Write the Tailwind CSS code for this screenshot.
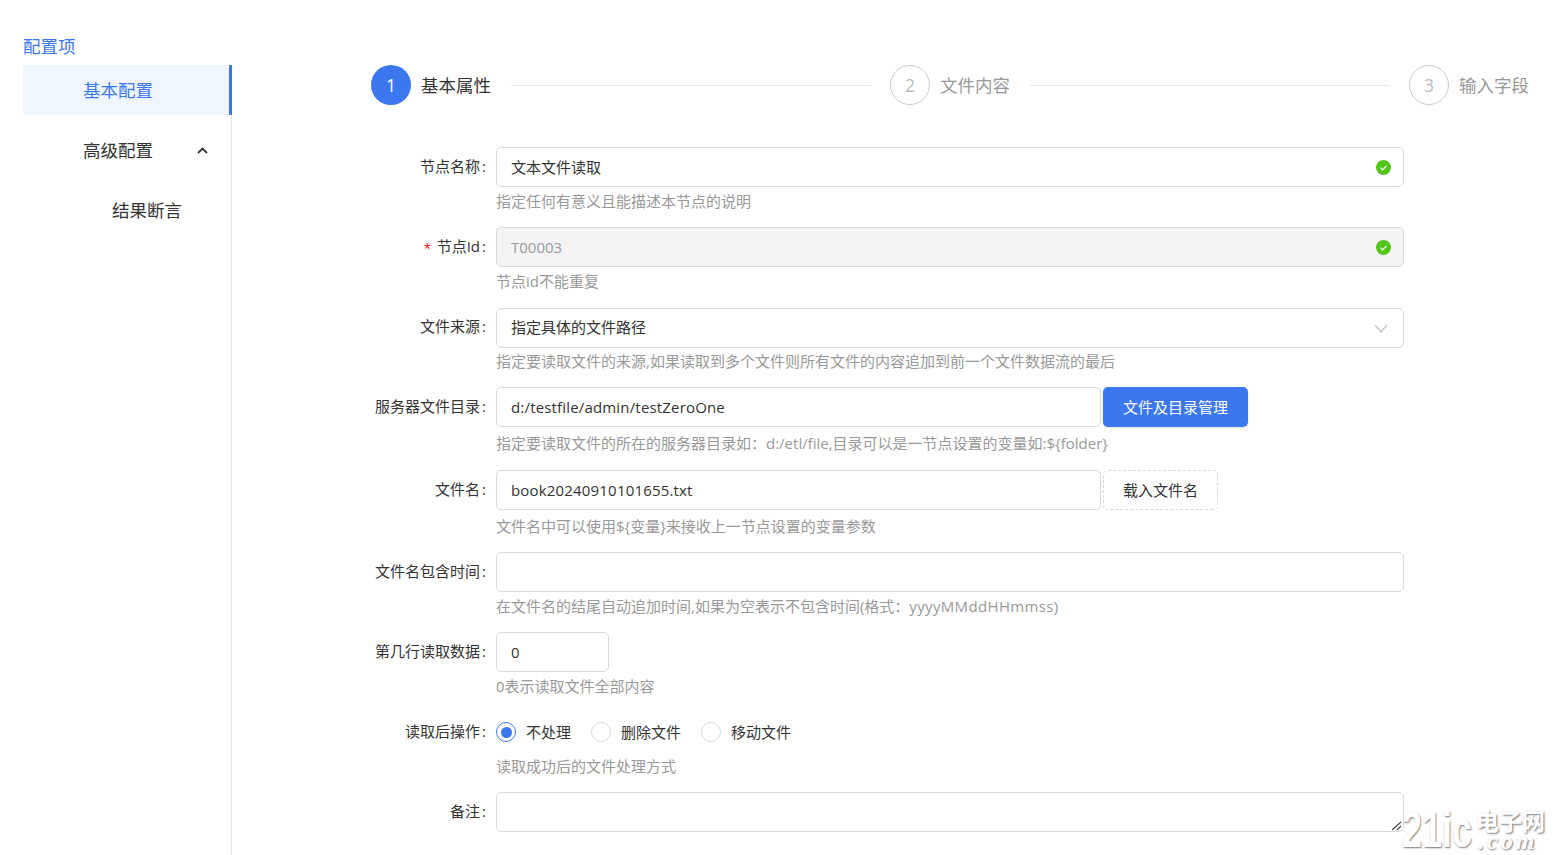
<!DOCTYPE html>
<html lang="zh-CN">
<head>
    <meta charset="UTF-8">
    <title>文本文件读取</title>
    <script src="https://cdn.jsdelivr.net/npm/@tailwindcss/browser@4"></script>
</head>
<body class="bg-white text-[#333] h-[855px] overflow-hidden relative font-['Open_Sans','Noto_Sans_CJK_SC',sans-serif] text-[15px]">

<div class="flex h-[855px]">
    <!-- Sidebar -->
    <aside class="w-[232px] pl-[23px] shrink-0">
        <div class="h-[65px] pt-[33px] text-[17.5px] leading-[26px] text-[#3b78f0]">配置项</div>
        <div class="border-r border-[#e8e8e8] h-[790px] w-full">
            <div class="h-[50px] bg-[#f0f6ff] border-r-[3px] border-[#3b78f0] mr-[-1px] pl-[60px] flex items-center text-[17.5px] text-[#3b78f0]">基本配置</div>
            <div class="h-[50px] mt-[10px] pl-[60px] pr-[23px] flex items-center justify-between text-[17.5px]">
                <span>高级配置</span>
                <svg class="w-[11px] h-[7px]" viewBox="0 0 11 7" fill="none" stroke="#333" stroke-width="1.8"><path d="M1 6l4.5-4.5L10 6"/></svg>
            </div>
            <div class="h-[50px] mt-[10px] pl-[89px] flex items-center text-[17.5px]">结果断言</div>
        </div>
    </aside>

    <!-- Main -->
    <main class="flex-1 pl-[139px] pr-[26px]">
        <!-- Steps -->
        <div class="flex items-center mt-[65px] h-[40px] text-[17.5px]">
            <div class="w-[40px] h-[40px] rounded-full bg-[#3b78f0] text-white flex items-center justify-center shrink-0">1</div>
            <span class="ml-[10px] w-[71px] shrink-0">基本属性</span>
            <div class="flex-1 h-px bg-[#e8e8e8] mx-[19px]"></div>
            <div class="w-[40px] h-[40px] rounded-full border border-[#ccc] text-[#bbb] flex items-center justify-center shrink-0">2</div>
            <span class="ml-[10px] w-[71px] text-[#999] shrink-0">文件内容</span>
            <div class="flex-1 h-px bg-[#e8e8e8] mx-[19px]"></div>
            <div class="w-[40px] h-[40px] rounded-full border border-[#ccc] text-[#bbb] flex items-center justify-center shrink-0">3</div>
            <span class="ml-[10px] w-[71px] text-[#999] shrink-0">输入字段</span>
        </div>

        <!-- Form -->
        <form class="mt-[42px] w-[1033px]">
            <div class="flex h-[80px]">
                <label class="w-[125px] pr-[10px] h-[38px] flex items-center justify-end shrink-0">节点名称<span class="ml-[2px]">:</span></label>
                <div class="flex-1">
                    <div class="h-[40px] border border-[#d9d9d9] rounded-[5px] flex items-center justify-between pl-[14px] pr-[12px]">
                        <span>文本文件读取</span>
                        <svg class="w-[15px] h-[15px]" viewBox="0 0 15 15"><circle cx="7.5" cy="7.5" r="7.5" fill="#52c41a"/><path d="M4.5 7.7l2.1 2.1 3.9-4" fill="none" stroke="#fff" stroke-width="1.2"/></svg>
                    </div>
                    <p class="leading-[28px] text-[#999]">指定任何有意义且能描述本节点的说明</p>
                </div>
            </div>

            <div class="flex h-[81px]">
                <label class="w-[125px] pr-[10px] h-[38px] flex items-center justify-end shrink-0"><span class="font-['Liberation_Sans'] text-[#f5222d] text-[17px] leading-none mr-[6px] translate-y-[3px]">*</span>节点Id<span class="ml-[2px]">:</span></label>
                <div class="flex-1">
                    <div class="h-[40px] border border-[#d9d9d9] rounded-[5px] bg-[#f4f4f4] flex items-center justify-between pl-[14px] pr-[12px] text-[#999]">
                        <span>T00003</span>
                        <svg class="w-[15px] h-[15px]" viewBox="0 0 15 15"><circle cx="7.5" cy="7.5" r="7.5" fill="#52c41a"/><path d="M4.5 7.7l2.1 2.1 3.9-4" fill="none" stroke="#fff" stroke-width="1.2"/></svg>
                    </div>
                    <p class="leading-[28px] text-[#999]">节点id不能重复</p>
                </div>
            </div>

            <div class="flex h-[79px]">
                <label class="w-[125px] pr-[10px] h-[36px] flex items-center justify-end shrink-0">文件来源<span class="ml-[2px]">:</span></label>
                <div class="flex-1">
                    <div class="h-[40px] border border-[#d9d9d9] rounded-[5px] flex items-center justify-between pl-[14px] pr-[15px]">
                        <span class="-translate-y-px">指定具体的文件路径</span>
                        <svg class="w-[14px] h-[9px]" viewBox="0 0 14 9" fill="none" stroke="#c4c4c4" stroke-width="1.2"><path d="M1 1l6 7 6-7"/></svg>
                    </div>
                    <p class="leading-[26px] text-[#999]">指定要读取文件的来源,如果读取到多个文件则所有文件的内容追加到前一个文件数据流的最后</p>
                </div>
            </div>

            <div class="flex h-[83px]">
                <label class="w-[125px] pr-[10px] h-[38px] flex items-center justify-end shrink-0">服务器文件目录<span class="ml-[2px]">:</span></label>
                <div class="flex-1">
                    <div class="flex gap-[2px]">
                        <div class="w-[605px] h-[40px] border border-[#d9d9d9] rounded-[5px] flex items-center pl-[14px] tracking-[0.17px]">d:/testfile/admin/testZeroOne</div>
                        <button type="button" class="w-[145px] h-[40px] rounded-[5px] bg-[#3b78f0] text-white shadow-sm">文件及目录管理</button>
                    </div>
                    <p class="mt-[2px] leading-[28px] text-[#999]">指定要读取文件的所在的服务器目录如：d:/etl/file,目录可以是一节点设置的变量如:${folder}</p>
                </div>
            </div>

            <div class="flex h-[82px]">
                <label class="w-[125px] pr-[10px] h-[38px] flex items-center justify-end shrink-0">文件名<span class="ml-[2px]">:</span></label>
                <div class="flex-1">
                    <div class="flex gap-[2px]">
                        <div class="w-[605px] h-[40px] border border-[#d9d9d9] rounded-[5px] flex items-center pl-[14px] tracking-[0.18px]">book20240910101655.txt</div>
                        <button type="button" class="w-[115px] h-[40px] rounded-[5px] border border-dashed border-[#d9d9d9]">载入文件名</button>
                    </div>
                    <p class="mt-[2px] leading-[28px] text-[#999]">文件名中可以使用${变量}来接收上一节点设置的变量参数</p>
                </div>
            </div>

            <div class="flex h-[80px]">
                <label class="w-[125px] pr-[10px] h-[38px] flex items-center justify-end shrink-0">文件名包含时间<span class="ml-[2px]">:</span></label>
                <div class="flex-1">
                    <div class="h-[40px] border border-[#d9d9d9] rounded-[5px]"></div>
                    <p class="leading-[28px] text-[#999]">在文件名的结尾自动追加时间,如果为空表示不包含时间(格式：<span class="tracking-[0.35px]">yyyyMMddHHmmss</span>)</p>
                </div>
            </div>

            <div class="flex h-[80px]">
                <label class="w-[125px] pr-[10px] h-[38px] flex items-center justify-end shrink-0">第几行读取数据<span class="ml-[2px]">:</span></label>
                <div class="flex-1">
                    <div class="w-[113px] h-[40px] border border-[#d9d9d9] rounded-[5px] flex items-center pl-[14px]">0</div>
                    <p class="leading-[28px] text-[#999]">0表示读取文件全部内容</p>
                </div>
            </div>

            <div class="flex h-[80px]">
                <label class="w-[125px] pr-[10px] h-[38px] flex items-center justify-end shrink-0">读取后操作<span class="ml-[2px]">:</span></label>
                <div class="flex-1">
                    <div class="h-[40px] flex items-center">
                        <span class="w-[20px] h-[20px] rounded-full border border-[#3b78f0] flex items-center justify-center"><span class="w-[11px] h-[11px] rounded-full bg-[#3b78f0]"></span></span>
                        <span class="ml-[10px]">不处理</span>
                        <span class="ml-[20px] w-[20px] h-[20px] rounded-full border border-[#d9d9d9]"></span>
                        <span class="ml-[10px]">删除文件</span>
                        <span class="ml-[20px] w-[20px] h-[20px] rounded-full border border-[#d9d9d9]"></span>
                        <span class="ml-[10px]">移动文件</span>
                    </div>
                    <p class="leading-[28px] text-[#999]">读取成功后的文件处理方式</p>
                </div>
            </div>

            <div class="flex">
                <label class="w-[125px] pr-[10px] h-[38px] flex items-center justify-end shrink-0">备注<span class="ml-[2px]">:</span></label>
                <div class="flex-1 relative h-[40px]">
                    <textarea class="w-full h-[40px] border border-[#d9d9d9] rounded-[5px] block resize-none"></textarea>
                    <svg class="absolute right-[1px] bottom-[1px] w-[12px] h-[12px]" viewBox="0 0 12 12" fill="none" stroke="#444" stroke-width="1.1"><path d="M1 11L10 3M6 11l4-4"/></svg>
                </div>
            </div>
        </form>
    </main>
</div>

<!-- watermark -->
<div class="absolute left-[1402px] top-[808px] w-[150px] h-[44px] text-white [text-shadow:1px_1px_2px_#777] pointer-events-none select-none">
    <span class="absolute left-0 top-0 font-['Liberation_Sans'] font-bold text-[50px] leading-[44px] origin-left scale-x-[0.72]">21ic</span>
    <span class="absolute left-[74px] top-[2px] text-[23px] leading-[22px] font-bold whitespace-nowrap">电子网</span>
    <span class="absolute left-[76px] top-[24px] font-['Liberation_Serif'] italic font-bold text-[24px] leading-[18px] tracking-[3px]">.com</span>
</div>

</body>
</html>
